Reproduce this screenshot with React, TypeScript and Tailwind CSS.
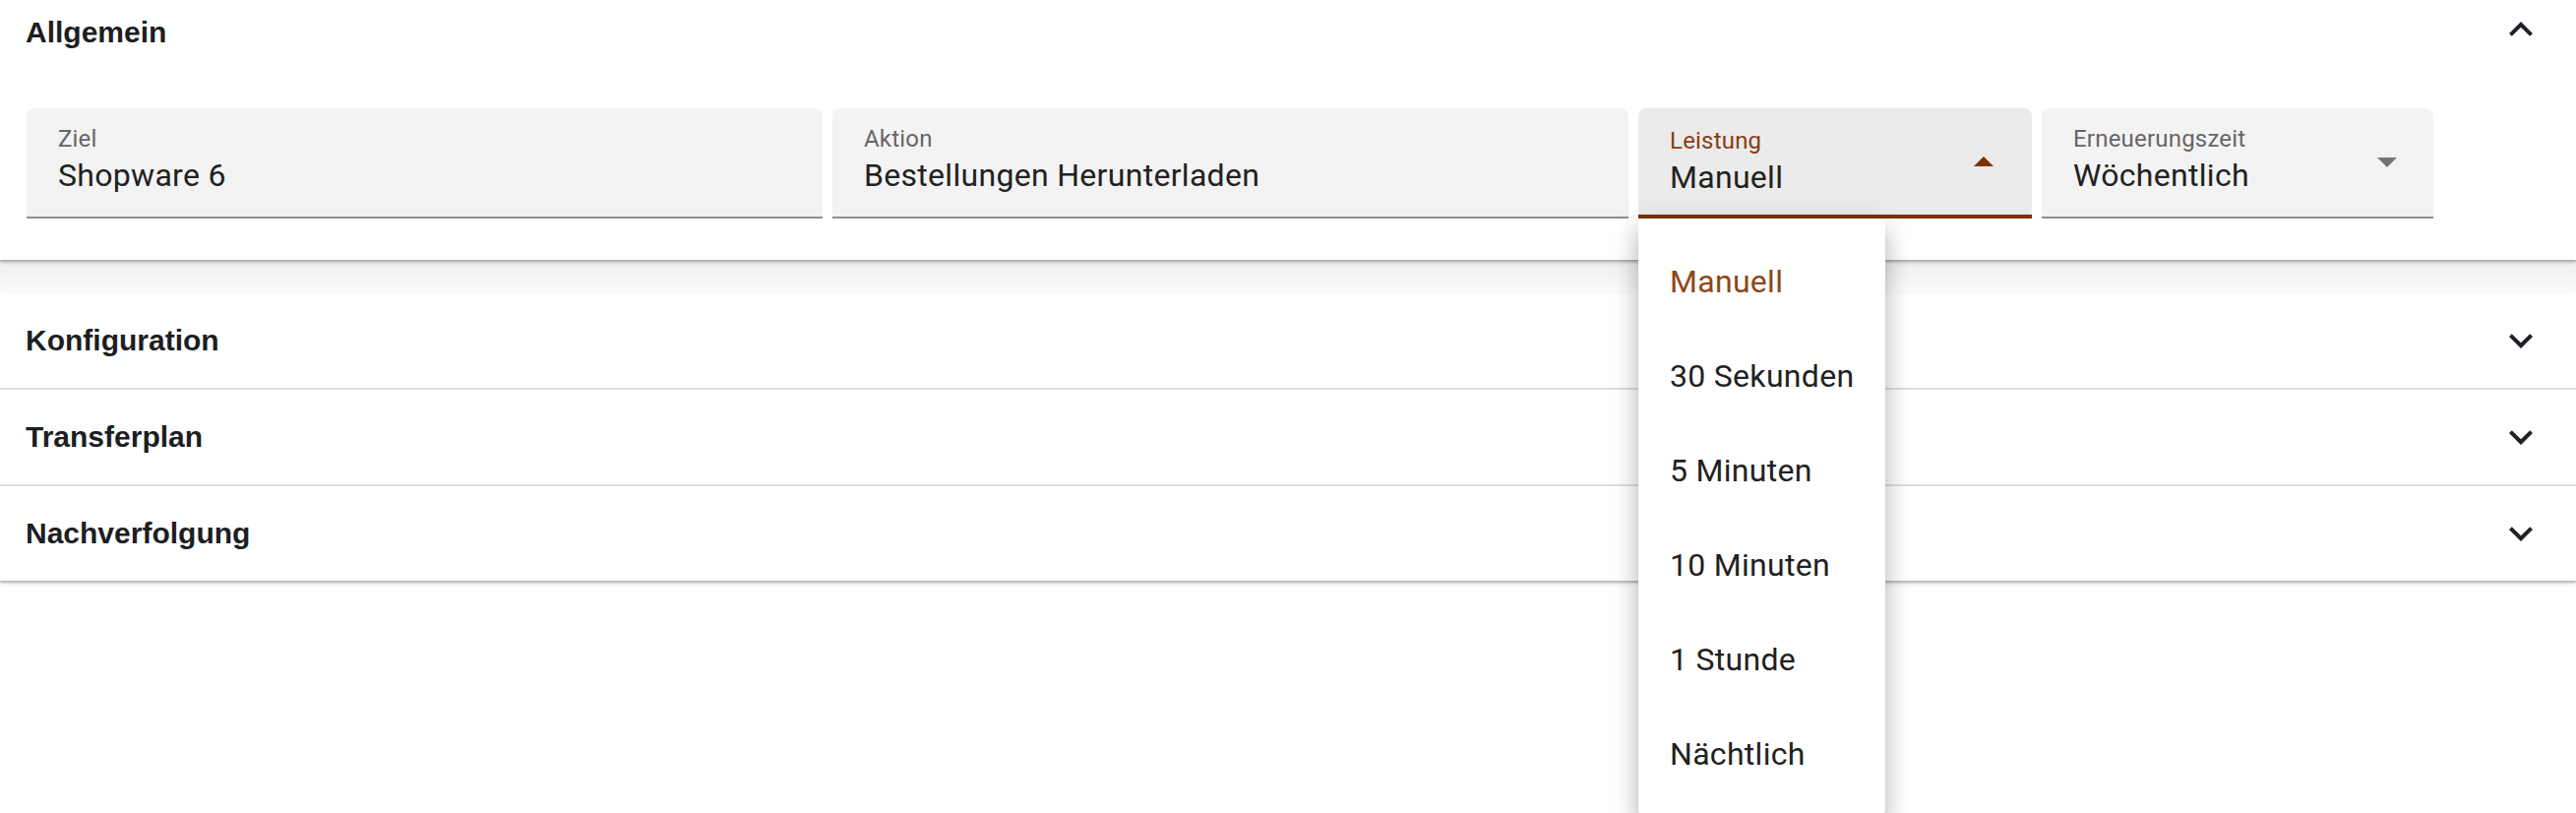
import { useState } from 'react';

const headingFont = { fontFamily: '"Liberation Sans", Arial, sans-serif' };

function ChevronIcon({ up }: { up?: boolean }) {
    return (
        <svg viewBox="0 0 24 24" className="h-[48px] w-[48px] fill-[#1f2125]">
            {up ? (
                <path d="M12 8l-6 6 1.41 1.41L12 10.83l4.59 4.58L18 14z" />
            ) : (
                <path d="M16.59 8.59 12 13.17 7.41 8.59 6 10l6 6 6-6z" />
            )}
        </svg>
    );
}

function Caret({ up, color }: { up?: boolean; color: string }) {
    return (
        <svg viewBox="0 0 20 10" className="h-[10px] w-[20px] shrink-0" fill={color}>
            {up ? <path d="M0 10 10 0 20 10z" /> : <path d="M0 0 10 10 20 0z" />}
        </svg>
    );
}

function TextField({ label, value, width }: { label: string; value: string; width: string }) {
    return (
        <div
            className={`${width} flex h-[112px] flex-col rounded-t-[8px] border-b-2 border-[#8f8f8f] bg-[#f3f3f3] px-[32px] pt-[19px] font-['Roboto',sans-serif]`}
        >
            <span className="text-[24px] leading-[24px] tracking-[0.2px] text-[#666666]">{label}</span>
            <span className="mt-[9px] text-[32px] leading-[32px] tracking-[0.3px] text-[#212121]">{value}</span>
        </div>
    );
}

const intervals = ['Manuell', '30 Sekunden', '5 Minuten', '10 Minuten', '1 Stunde', 'Nächtlich'];

function IntervalSelect() {
    const [selected] = useState('Manuell');

    return (
        <div className="relative w-[400px]">
            <div className="flex h-[112px] items-center rounded-t-[8px] border-b-4 border-[#7c3100] bg-[#ebebeb] pl-[32px] pr-[39px] font-['Roboto',sans-serif]">
                <div className="flex h-full flex-1 flex-col pt-[21px]">
                    <span className="text-[24px] leading-[24px] tracking-[0.2px] text-[#8a3c10]">Leistung</span>
                    <span className="mt-[9px] text-[32px] leading-[32px] tracking-[0.3px] text-[#212121]">{selected}</span>
                </div>
                <Caret up color="#7c3100" />
            </div>
            <ul className="absolute left-0 top-full z-10 w-[251px] rounded-[8px] bg-white py-[16px] font-['Roboto',sans-serif] shadow-[0_10px_10px_-6px_rgba(0,0,0,0.2),0_16px_20px_2px_rgba(0,0,0,0.14),0_6px_28px_4px_rgba(0,0,0,0.12)]">
                {intervals.map((item) => (
                    <li
                        key={item}
                        className={`flex h-[96px] items-center pl-[32px] text-[32px] tracking-[0.3px] ${
                            item === selected ? 'text-[#8f4619]' : 'text-[#212121]'
                        }`}
                    >
                        {item}
                    </li>
                ))}
            </ul>
        </div>
    );
}

function RenewalSelect() {
    return (
        <div className="flex h-[112px] w-[398px] items-center rounded-t-[8px] border-b-2 border-[#8f8f8f] bg-[#f3f3f3] pl-[32px] pr-[37px] font-['Roboto',sans-serif]">
            <div className="flex h-full flex-1 flex-col pt-[19px]">
                <span className="text-[24px] leading-[24px] tracking-[0.2px] text-[#666666]">Erneuerungszeit</span>
                <span className="mt-[9px] text-[32px] leading-[32px] tracking-[0.3px] text-[#212121]">Wöchentlich</span>
            </div>
            <Caret color="#757575" />
        </div>
    );
}

function CollapsedRow({ title, divider }: { title: string; divider?: boolean }) {
    return (
        <div className={divider ? 'border-t-2 border-[#dcdcdc]' : ''}>
            <div className="flex h-[96px] items-center justify-between pl-[26px] pr-[32px]">
                <h3 className="text-[30px] font-bold leading-[32px] text-[#1c1e22]" style={headingFont}>
                    {title}
                </h3>
                <ChevronIcon />
            </div>
        </div>
    );
}

export default function App() {
    return (
        <div className="min-h-[826px] w-full bg-white">
            {/* Allgemein, expanded */}
            <section className="relative z-[1] bg-white pb-[42px] shadow-[0_2px_2px_rgba(0,0,0,0.22),0_3px_5px_rgba(0,0,0,0.1)]">
                <div className="flex items-start justify-between pl-[26px] pr-[32px] pt-[6px]">
                    <h2 className="mt-[11px] text-[30px] font-bold leading-[32px] text-[#1c1e22]" style={headingFont}>
                        Allgemein
                    </h2>
                    <ChevronIcon up />
                </div>
                <div className="mt-[56px] flex gap-[10px] pl-[27px]">
                    <TextField label="Ziel" value="Shopware 6" width="w-[809px]" />
                    <TextField label="Aktion" value="Bestellungen Herunterladen" width="w-[809px]" />
                    <IntervalSelect />
                    <RenewalSelect />
                </div>
            </section>

            <div className="h-[34px] bg-gradient-to-b from-[#eeeeee] to-[#fbfbfb]" />

            {/* collapsed panels */}
            <section className="bg-white shadow-[0_2px_2px_rgba(0,0,0,0.22),0_3px_5px_rgba(0,0,0,0.1)]">
                <CollapsedRow title="Konfiguration" />
                <CollapsedRow title="Transferplan" divider />
                <CollapsedRow title="Nachverfolgung" divider />
            </section>
        </div>
    );
}
